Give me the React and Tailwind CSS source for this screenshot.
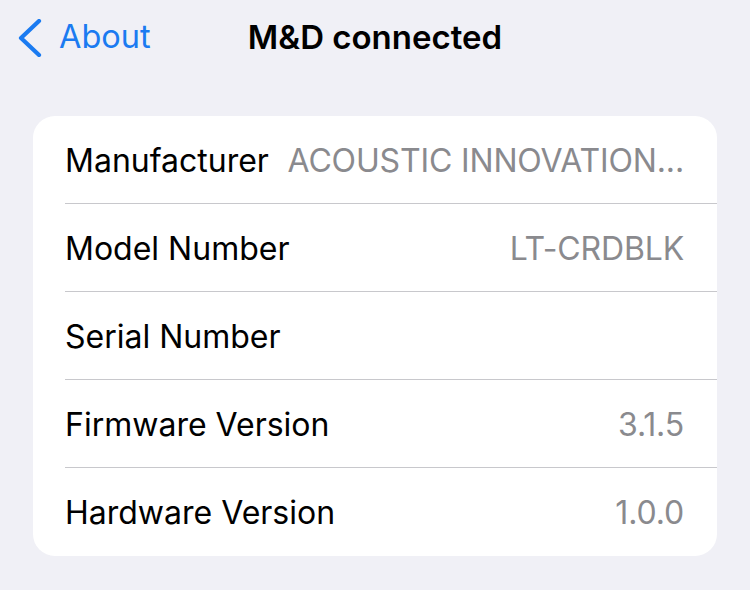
import React from "react";

const rows = [
  ["Manufacturer", "ACOUSTIC INNOVATION..."],
  ["Model Number", "LT-CRDBLK"],
  ["Serial Number", ""],
  ["Firmware Version", "3.1.5"],
  ["Hardware Version", "1.0.0"],
];

export default function App() {
  return (
    <div
      className="w-[750px] h-[590px] bg-[#f0f0f6] overflow-hidden"
      style={{ fontFamily: "Inter, 'Noto Sans', sans-serif" }}
    >
      <div className="grid grid-cols-[1fr_auto_1fr] items-center h-[75px]">
        <div className="flex items-center pl-[18px] gap-[16px] text-[#1b7bf1]">
          <svg width="25" height="38" viewBox="0 0 25 38" fill="none">
            <path
              d="M21 2 L3 19 L21 36"
              stroke="currentColor"
              strokeWidth="4.2"
              strokeLinecap="round"
              strokeLinejoin="round"
            />
          </svg>
          <span className="text-[32.5px] leading-none">About</span>
        </div>
        <div className="text-[33px] font-semibold leading-none text-black">
          M&amp;D connected
        </div>
        <div />
      </div>
      <div className="mx-[33px] mt-[41px] bg-white rounded-[22px] overflow-hidden">
        {rows.map(([label, value], i) => (
          <div key={label} className="pl-[32px]">
            <div
              className={
                "flex items-center justify-between h-[88px] pr-[33px] pt-[2px] " +
                (i < rows.length - 1 ? "border-b border-[#c8c8cc]" : "")
              }
            >
              <span className="text-[32px] text-black whitespace-nowrap shrink-0">
                {label}
              </span>
              <span className="text-[32px] text-[#8a8a8e] whitespace-nowrap shrink-0 tracking-[-0.15px]">
                {value}
              </span>
            </div>
          </div>
        ))}
      </div>
    </div>
  );
}
